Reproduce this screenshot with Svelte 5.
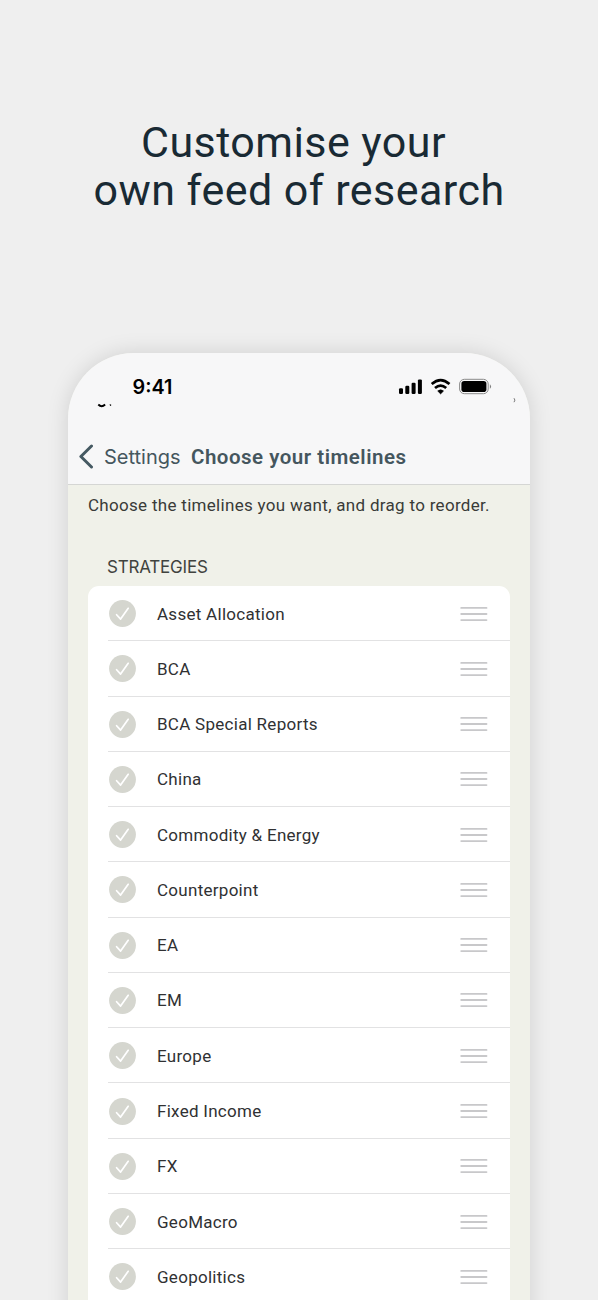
<script>
  const strategies = [
    'Asset Allocation', 'BCA', 'BCA Special Reports', 'China', 'Commodity & Energy',
    'Counterpoint', 'EA', 'EM', 'Europe', 'Fixed Income', 'FX', 'GeoMacro', 'Geopolitics'
  ];
</script>

<main>
  <h1><span class="first">Customise your</span><span>own feed of research</span></h1>

  <section class="phone">
    <header>
      <div class="status">
        <time>9:41</time>
        <svg class="indicators" width="94" height="20" viewBox="0 0 94 20">
          <g fill="#000">
            <rect x="1" y="11.2" width="4" height="5.8" rx="1.2" />
            <rect x="7.3" y="8.8" width="4" height="8.2" rx="1.2" />
            <rect x="13.6" y="5.7" width="4" height="11.3" rx="1.2" />
            <rect x="19.9" y="2.4" width="4" height="14.6" rx="1.2" />
            <path d="M42.6 16.9 39.7 14q2.9-2.4 5.8 0Z" stroke="#000" stroke-width=".6" stroke-linejoin="round" />
            <rect x="63.4" y="4" width="25" height="11" rx="2.8" />
            <path d="M91.9 7.2q2.3 2.3 0 4.6Z" opacity=".5" />
          </g>
          <g fill="none" stroke="#000" stroke-width="2.7">
            <path d="M33.7 7.1q8.9-7.8 17.8 0" />
            <path d="M37 11q5.6-4.8 11.2 0" />
          </g>
          <rect x="61.6" y="2.3" width="28.6" height="14.4" rx="4.7" fill="none" stroke="#8a8a8a" stroke-width="1" />
        </svg>
        <svg class="remnants" width="420" height="12" viewBox="0 0 420 12">
          <path d="M1.3 6.5q3.4 3.4 6.8 0" fill="none" stroke="#000" stroke-width="1.9" />
          <path d="M12.5 6.2h1.6v1.8h-1z" fill="#333" />
          <path d="M417 .2q1.8 1.9 0 4" fill="none" stroke="#777" stroke-width="1" />
        </svg>
      </div>
      <nav>
        <svg width="16" height="26" viewBox="0 0 16 26"><path d="M13.5 2 2.9 12.5 13.5 23" fill="none" stroke="#455962" stroke-width="3" stroke-linecap="round" stroke-linejoin="round" /></svg>
        <span class="back">Settings</span>
        <h2>Choose your timelines</h2>
      </nav>
    </header>

    <p>Choose the timelines you want, and drag to reorder.</p>
    <h3>STRATEGIES</h3>
    <ul>
      {#each strategies as name}
        <li>
          <svg class="check" width="27" height="27" viewBox="0 0 27 27">
            <circle cx="13.5" cy="13.5" r="13.4" fill="#d5d6cf" />
            <path d="m7.6 14.7 4 4.4 7.6-10.8" fill="none" stroke="#fff" stroke-width="1.7" stroke-linecap="round" stroke-linejoin="round" />
          </svg>
          <div class="row">
            <span>{name}</span>
            <svg width="28" height="16" viewBox="0 0 28 16"><path d="M1.2 1.9h25.3M1.2 8h25.3M1.2 14.1h25.3" stroke="#c8c8ca" stroke-width="1.8" stroke-linecap="round" /></svg>
          </div>
        </li>
      {/each}
    </ul>
  </section>
</main>

<style>
  :global(body) { margin: 0; background: #efefef; }
  main {
    width: 598px; height: 1300px; box-sizing: border-box; overflow: hidden;
    padding-top: 118px; background: #efefef;
    font-family: Roboto, "Liberation Sans", sans-serif;
  }
  h1 {
    margin: 0; height: 235px; display: flex; flex-direction: column; align-items: center;
    color: #192a34; font-size: 43px; line-height: 48px; font-weight: 400;
    letter-spacing: .45px; white-space: nowrap;
  }
  .first { margin-right: 11px; }
  .phone {
    width: 462px; height: 1000px; margin-left: 68px; overflow: hidden;
    border-radius: 66px 66px 0 0; background: #f0f1e9;
    box-shadow: 0 0 22px rgba(0, 0, 0, .13);
  }
  header { height: 131px; background: #f7f7f8; border-bottom: 1px solid #d5d6d4; }
  .status { position: relative; height: 78px; }
  time {
    position: absolute; left: 64.5px; top: 22px; line-height: 24px;
    font-family: Inter, sans-serif; font-size: 19.8px; font-weight: 600; color: #000;
  }
  .indicators { position: absolute; left: 330px; top: 24px; }
  .remnants { position: absolute; left: 29px; top: 45px; }
  nav { height: 51px; display: flex; align-items: center; padding-left: 10px; box-sizing: border-box; color: #45565e; white-space: nowrap; }
  .back { width: 87px; margin-left: 10px; font: 400 20px/26px Inter, sans-serif; }
  h2 { margin: 0; font-size: 20.5px; line-height: 26px; font-weight: 600; letter-spacing: .5px; }
  p { margin: 10px 0 0 20px; font-size: 17px; line-height: 20px; letter-spacing: .3px; color: #393b38; white-space: nowrap; }
  h3 { margin: 42px 0 0 39px; font: 400 17px/20px Inter, sans-serif; letter-spacing: -.2px; color: #41433e; }
  ul { list-style: none; margin: 9px 20px 0; padding: 0; border-radius: 11px 11px 0 0; background: #fff; }
  li { position: relative; height: 55.27px; box-sizing: border-box; display: flex; align-items: center; padding: 0 22px 0 21px; }
  li::after { content: ""; position: absolute; left: 20px; right: 0; bottom: 0; height: 1px; background: #e2e2e3; }
  .check { flex: none; }
  .row { flex: 1; display: flex; align-items: center; justify-content: space-between; margin-left: 21px; }
  .row span { font-size: 17px; line-height: 22px; letter-spacing: .28px; color: #303133; }
</style>
